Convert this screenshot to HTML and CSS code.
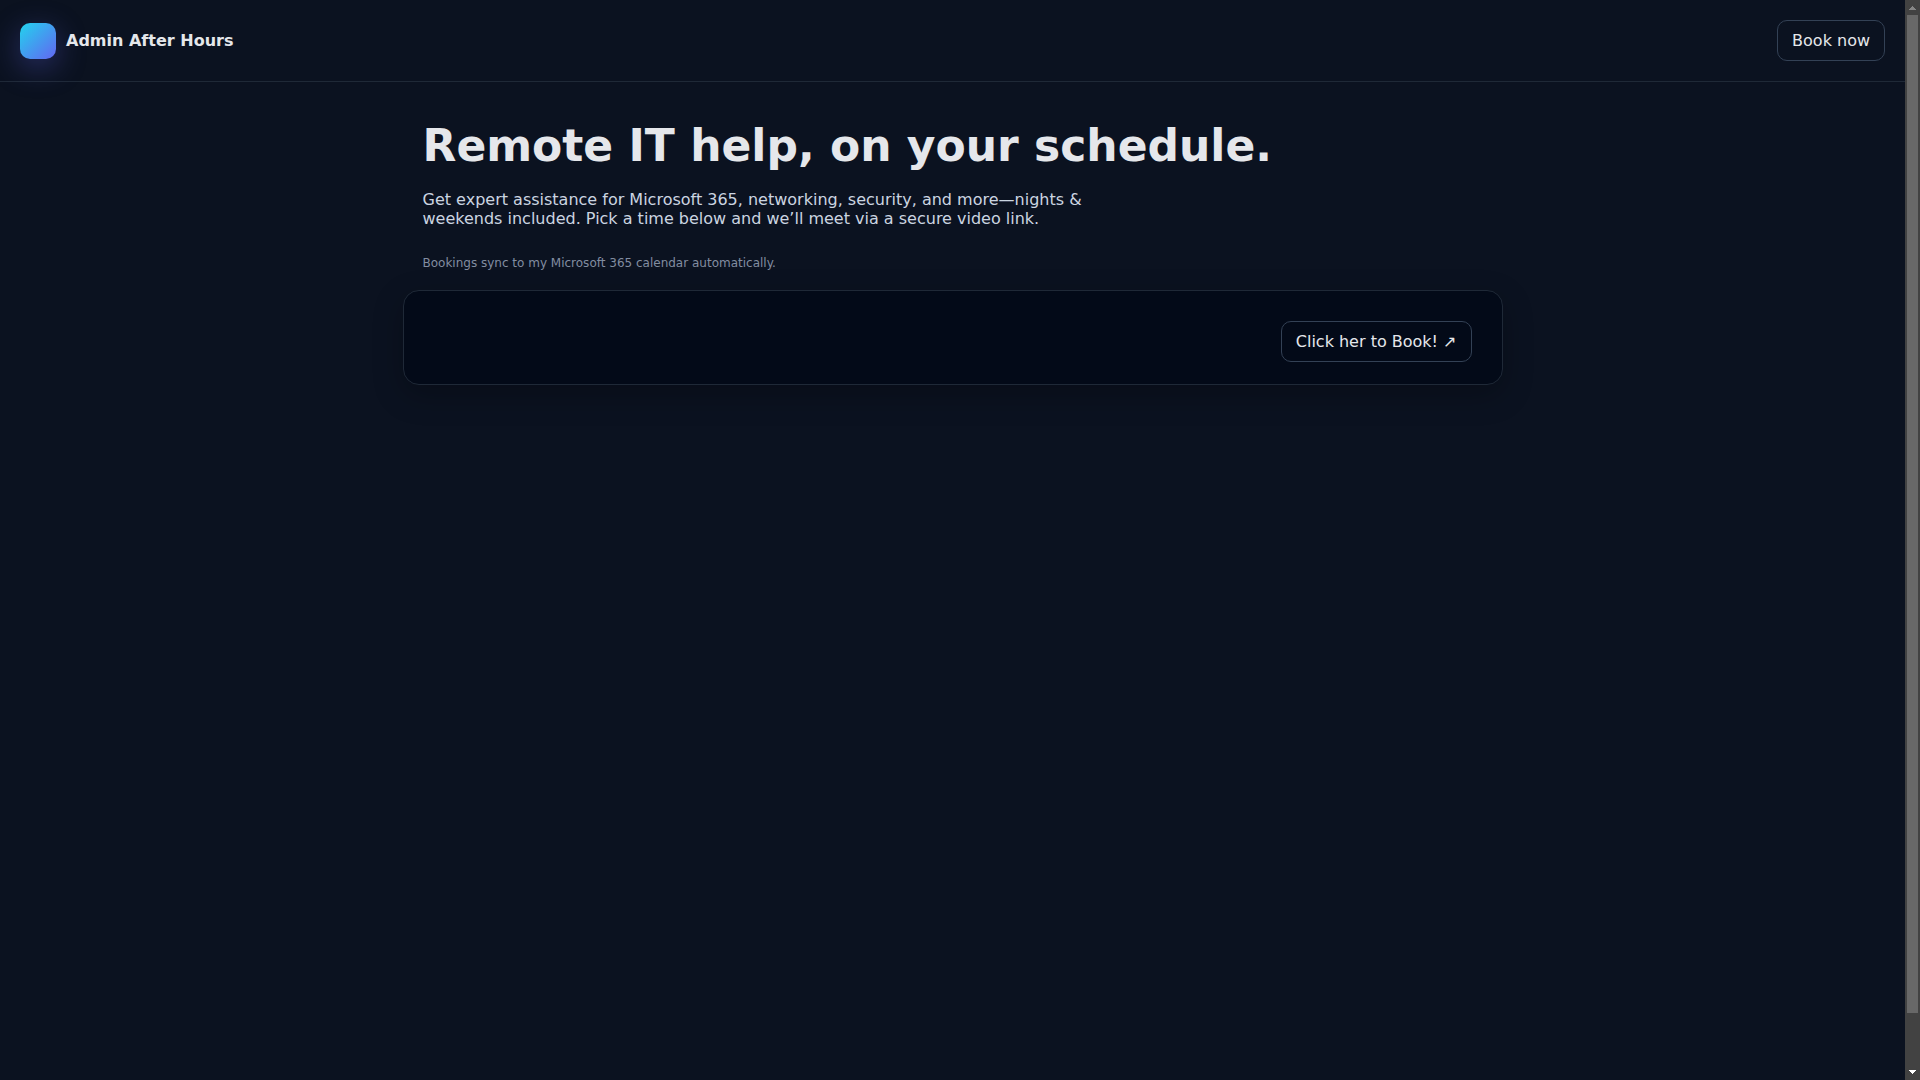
FILE: index.html
```
<!DOCTYPE html>
<html lang="en">
<head>
    <meta charset="UTF-8">
    <meta name="viewport" content="width=device-width, initial-scale=1.0">
    <title>Admin After Hours</title>
    <link rel="stylesheet" href="styles.css">
</head>
<body>
    <div class="page">
        <header class="header">
            <div class="brand">
                <div class="logo"></div>
                <span>Admin After Hours</span>
            </div>
            <a class="btn" href="#book">Book now</a>
        </header>

        <main class="container">
            <section class="hero">
                <h1>Remote IT help, on your schedule.</h1>
                <p class="lead">Get expert assistance for Microsoft 365, networking, security, and more—nights &amp; weekends included. Pick a time below and we’ll meet via a secure video link.</p>
                <p class="note">Bookings sync to my Microsoft 365 calendar automatically.</p>
            </section>

            <section class="card" id="book">
                <a class="btn" href="#book">Click her to Book! ↗</a>
            </section>
        </main>
    </div>

    <div class="scrollbar" aria-hidden="true">
        <svg class="arrow arrow-up" viewBox="0 0 7 4" shape-rendering="crispEdges"><path d="M3 0h1v1h1v1h1v1h1v1H0V3h1V2h1V1h1z"/></svg>
        <div class="track"><div class="thumb"></div></div>
        <svg class="arrow arrow-down" viewBox="0 0 7 4" shape-rendering="crispEdges"><path d="M0 0h7v1H6v1H5v1H4v1H3V3H2V2H1V1H0z"/></svg>
    </div>
</body>
</html>
```
FILE: styles.css
```
* {
    box-sizing: border-box;
}
body {
    display: flex;
    height: 100vh;
    margin: 0;
    font-family: "DejaVu Sans", sans-serif;
    font-size: 16px;
    background: #0b1220;
    color: #e5e7eb;
}
.page {
    flex: 1;
    min-width: 0;
    overflow: hidden;
}
.header {
    display: flex;
    align-items: center;
    justify-content: space-between;
    padding: 20px;
    border-bottom: 1px solid #1f2937;
}
.brand {
    display: flex;
    align-items: center;
    gap: 10px;
    font-weight: 700;
}
.logo {
    width: 36px;
    height: 36px;
    border-radius: 10px;
    background: linear-gradient(135deg, #22d3ee, #6366f1);
    box-shadow: 0 8px 30px rgba(99, 102, 241, 0.35);
}
.btn {
    display: inline-block;
    padding: 10px 14px;
    border: 1px solid #334155;
    border-radius: 10px;
    color: #e5e7eb;
    text-decoration: none;
}
.btn:hover {
    background: #111827;
}
.container {
    max-width: 1100px;
    margin: 0 auto;
}
.hero {
    padding: 40px 20px 20px;
}
.hero h1 {
    margin: 0 0 20px;
    font-size: 44px;
    line-height: 48px;
}
.lead {
    max-width: 700px;
    margin: 0 0 28px;
    color: #cbd5e1;
}
.note {
    margin: 0;
    font-size: 12px;
    color: #828da0;
}
.card {
    display: flex;
    justify-content: flex-end;
    padding: 30px 30px 22px;
    border: 1px solid #1f2937;
    border-radius: 16px;
    background: #030a18;
    box-shadow: 0 10px 30px rgba(0, 0, 0, 0.25);
}

/* page scrollbar */
.scrollbar {
    display: flex;
    flex-direction: column;
    align-items: center;
    width: 15px;
    padding: 6px 0;
    background: #424242;
}
.arrow {
    width: 7px;
    height: 4px;
}
.arrow-up {
    fill: #868686;
}
.arrow-down {
    fill: #ffffff;
}
.track {
    flex: 1;
    width: 11px;
    margin: 5px 0;
}
.thumb {
    height: 95%;
    background: #686868;
}
```
